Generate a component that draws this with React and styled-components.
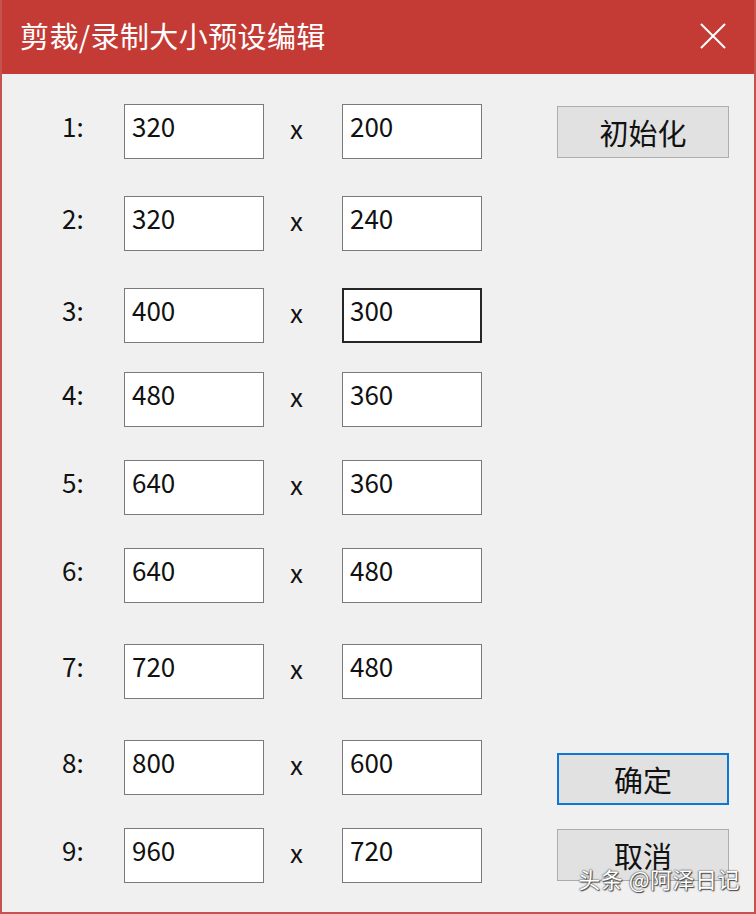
import styled, { createGlobalStyle } from 'styled-components'

const GlobalStyle = createGlobalStyle`
    html, body {
        margin: 0;
        padding: 0;
        background: #f0f0f0;
    }
    body {
        font-family: "Noto Sans CJK SC", "Noto Sans", sans-serif;
    }
`

const Window = styled.div`
    position: relative;
    width: 756px;
    height: 914px;
    box-sizing: border-box;
    display: flex;
    flex-direction: column;
    background: #f0f0f0;
    border: 2px solid #c4534e;
    border-top: none;
    overflow: hidden;
`

const TitleBar = styled.div`
    height: 74px;
    margin: 0 -2px;
    flex-shrink: 0;
    background: #c43b35;
    display: flex;
    align-items: center;
    justify-content: space-between;
    padding: 0 30px 0 20px;
`

const Title = styled.span`
    color: #fff;
    font-size: 29px;
    letter-spacing: 0.4px;
    margin-top: -4px;
`

const Close = styled.svg`
    width: 26px;
    height: 26px;
    margin-top: -2px;
`

const Body = styled.div`
    flex: 1;
    display: flex;
    justify-content: space-between;
`

const Rows = styled.div`
    padding-left: 60px;
    display: flex;
    flex-direction: column;
`

const Row = styled.div`
    display: flex;
    align-items: flex-start;
    margin-top: ${p => p.$gap}px;
`

const Label = styled.div`
    width: 62px;
    padding-top: 6px;
    font-size: 26px;
    line-height: 32px;
    color: #111;
`

const Field = styled.div`
    width: 140px;
    height: 55px;
    box-sizing: border-box;
    background: #fff;
    border: ${p => (p.$focused ? '2px solid #262626' : '1px solid #7a7a7a')};
    padding: ${p => (p.$focused ? '4px 0 0 6px' : '5px 0 0 7px')};
    font-size: 26px;
    line-height: 32px;
    color: #111;
`

const Times = styled.div`
    width: 78px;
    box-sizing: border-box;
    padding: 8px 0 0 26px;
    font-size: 26px;
    line-height: 32px;
    color: #111;
`

const Side = styled.div`
    display: flex;
    flex-direction: column;
    padding: 32px 25px 31px 0;
`

const Button = styled.div`
    width: 172px;
    height: 52px;
    box-sizing: border-box;
    background: #e1e1e1;
    border: ${p => (p.$primary ? '2px solid #0a78d4' : '1px solid #adadad')};
    display: flex;
    align-items: center;
    justify-content: center;
    font-size: 29px;
    color: #111;
    margin-top: ${p => p.$mt || 0};
`

const Watermark = styled.div`
    position: absolute;
    right: 14px;
    bottom: 18px;
    font-size: 22px;
    color: #fff;
    letter-spacing: 0.5px;
    text-shadow: 0 0 2px #555, 0 0 1px #333, 1px 1px 1px #444;
`

const presets = [
    [320, 200, 30],
    [320, 240, 37],
    [400, 300, 37],
    [480, 360, 29],
    [640, 360, 33],
    [640, 480, 33],
    [720, 480, 41],
    [800, 600, 41],
    [960, 720, 33],
]

const App = () => {
    return (
        <>
            <GlobalStyle />
            <Window>
                <TitleBar>
                    <Title>剪裁/录制大小预设编辑</Title>
                    <Close viewBox="0 0 26 26">
                        <path d="M1 1 L25 25 M25 1 L1 25" stroke="#fff" strokeWidth="2" />
                    </Close>
                </TitleBar>
                <Body>
                    <Rows>
                        {presets.map(([w, h, gap], i) => (
                            <Row key={i} $gap={gap}>
                                <Label>{i + 1}:</Label>
                                <Field>{w}</Field>
                                <Times>x</Times>
                                <Field $focused={i === 2}>{h}</Field>
                            </Row>
                        ))}
                    </Rows>
                    <Side>
                        <Button>初始化</Button>
                        <Button $primary $mt="auto">确定</Button>
                        <Button $mt="24px">取消</Button>
                    </Side>
                </Body>
                <Watermark>头条 @阿泽日记</Watermark>
            </Window>
        </>
    )
}

export default App
